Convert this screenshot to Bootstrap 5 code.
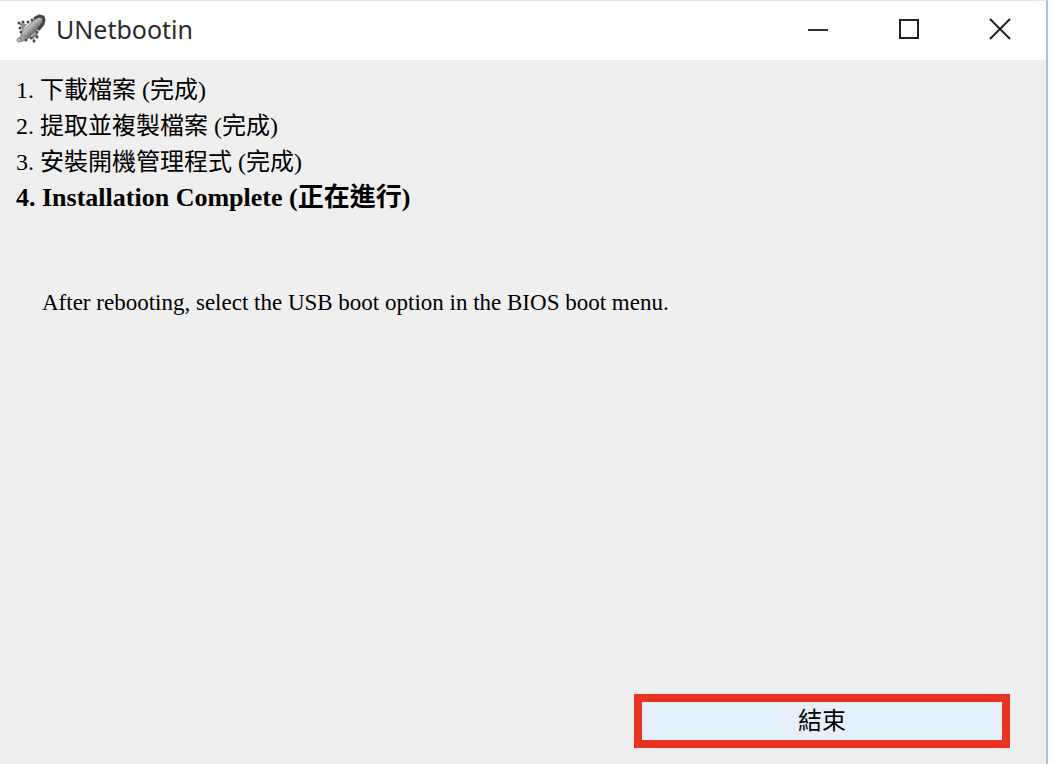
<!DOCTYPE html>
<html lang="zh-Hant">
<head>
<meta charset="utf-8">
<meta name="viewport" content="width=device-width, initial-scale=1">
<title>UNetbootin</title>
<link href="https://cdn.jsdelivr.net/npm/bootstrap@5.3.0/dist/css/bootstrap.min.css" rel="stylesheet">
<style>
body { background: #fff; color: #000; }
.app-window {
  margin-right: 8px;
  border-top: 1px solid #e3e8ee;
  border-right: 2px solid #a9c2e2;
  background: #efefef;
  font: 24px/36px "Liberation Serif", "Noto Sans CJK TC", serif;
}
.title-bar { height: 59px; background: #fff; padding: 0 1px 4px 16px; }
.title-bar h1 { font: 25px/32px "Noto Sans", sans-serif; color: #2b2b2b; }
.win-btn { width: 91px; height: 54px; border: 0; background: none; padding: 0; }
.win-btn svg { display: block; margin: auto; }
.steps { padding: 12px 16px 0; margin-bottom: 69px; }
.current-step { font-size: 26px; font-weight: 700; }
.note { padding: 0 42px; font-size: 23px; }
.actions { padding: 0 36px 16px; }
.exit-btn {
  width: 376px; height: 54px; padding: 0;
  border: 8px solid #e93323; border-radius: 0;
  background: #e6f0fa; color: #000; font: inherit;
}
.exit-btn:hover { background: #d8e8f8; border-color: #e93323; }
</style>
</head>
<body>
<div class="app-window d-flex flex-column min-vh-100">
  <header class="title-bar d-flex align-items-center justify-content-between">
    <div class="d-flex align-items-center gap-2">
      <svg width="32" height="32" viewBox="0 0 32 32" aria-hidden="true">
        <defs>
          <linearGradient id="hull" gradientUnits="userSpaceOnUse" x1="9" y1="9" x2="20" y2="21">
            <stop offset="0" stop-color="#666"/><stop offset=".4" stop-color="#bdbdbd"/><stop offset=".65" stop-color="#8e8e8e"/><stop offset="1" stop-color="#484848"/>
          </linearGradient>
        </defs>
        <path d="M11 11L3 10l3 5-1 5zM15 24l4 5-1-5 4 1-1-8z" fill="#8a8a8a"/>
        <path d="M20 4l4-2 4 3 0 5L12 26 7 26 4 22 7 17z" fill="url(#hull)"/>
        <path d="M19 5l4-2 4 1 1 3-1 4-4 5" fill="none" stroke="#444" stroke-width="3" stroke-linecap="round" stroke-linejoin="round"/>
        <path d="M7 21l-3 5M11 25l-6 3" stroke="#999" stroke-width="3"/>
        <g fill="#484848">
          <circle cx="3" cy="10" r="1.5"/><circle cx="7" cy="9" r="1.5"/><circle cx="12" cy="9" r="1.5"/>
          <circle cx="4" cy="15" r="1.5"/><circle cx="5" cy="19" r="1.5"/><circle cx="16" cy="7" r="1.5"/>
          <circle cx="21" cy="19" r="1.5"/><circle cx="21" cy="24" r="1.5"/><circle cx="18" cy="28" r="1.5"/>
          <circle cx="15" cy="25" r="1.5"/><circle cx="10" cy="27" r="1.5"/>
        </g>
        <circle cx="3" cy="27" r="2" fill="#ccc" stroke="#777" stroke-width="1"/>
      </svg>
      <h1 class="m-0">UNetbootin</h1>
    </div>
    <div class="d-flex">
      <button class="win-btn" type="button" aria-label="Minimize"><svg width="22" height="22" viewBox="0 0 22 22"><path d="M1 12h20" stroke="#333" stroke-width="2"/></svg></button>
      <button class="win-btn" type="button" aria-label="Maximize"><svg width="22" height="22" viewBox="0 0 22 22"><path d="M2 2h18v18H2z" fill="none" stroke="#222" stroke-width="2"/></svg></button>
      <button class="win-btn" type="button" aria-label="Close"><svg width="22" height="22" viewBox="0 0 22 22"><path d="M1 1l20 20M21 1L1 21" stroke="#222" stroke-width="2"/></svg></button>
    </div>
  </header>
  <main class="d-flex flex-column flex-grow-1">
    <ol class="steps list-unstyled">
      <li>1. 下載檔案 (完成)</li>
      <li>2. 提取並複製檔案 (完成)</li>
      <li>3. 安裝開機管理程式 (完成)</li>
      <li class="current-step">4. Installation Complete (正在進行)</li>
    </ol>
    <p class="note m-0">After rebooting, select the USB boot option in the BIOS boot menu.</p>
    <div class="actions d-flex justify-content-end mt-auto">
      <button class="exit-btn btn" type="button">結束</button>
    </div>
  </main>
</div>
<script src="https://cdn.jsdelivr.net/npm/bootstrap@5.3.0/dist/js/bootstrap.bundle.min.js"></script>
</body>
</html>
